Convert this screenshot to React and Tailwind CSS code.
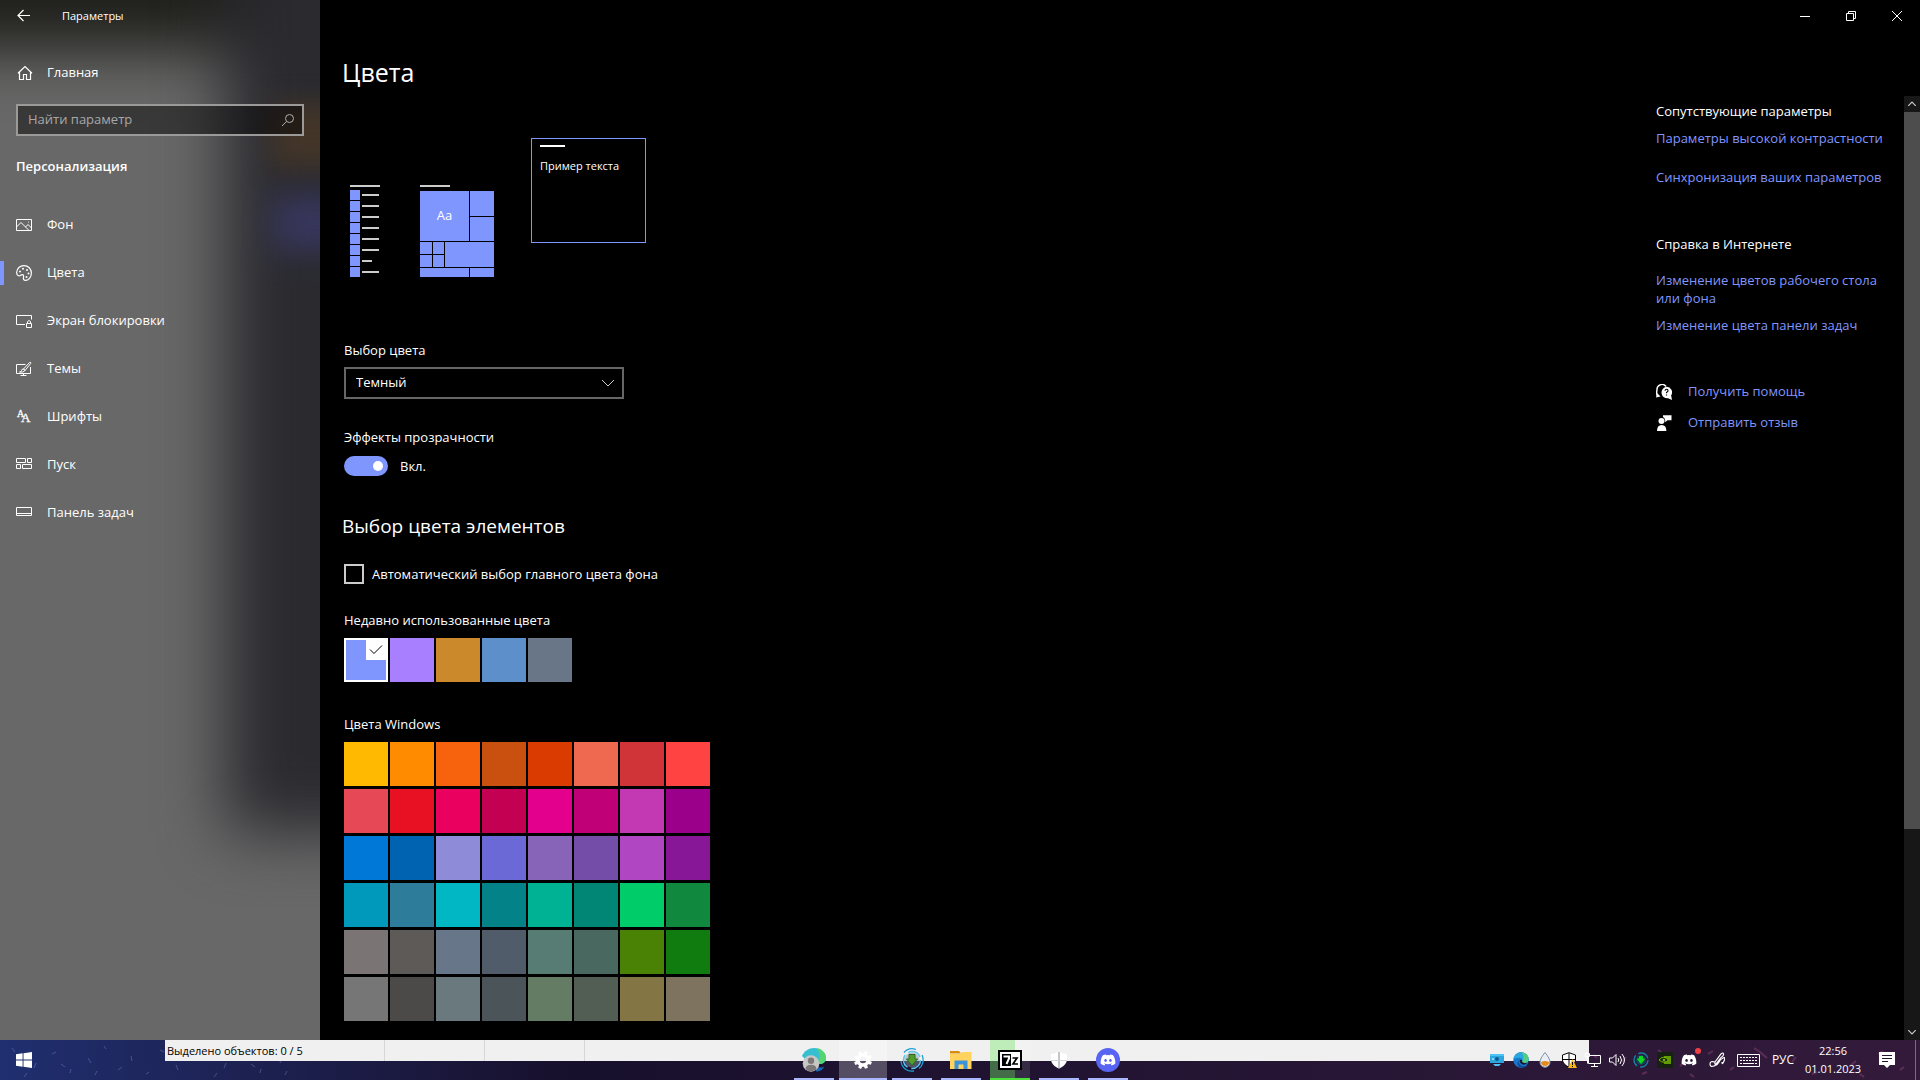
import { useState } from "react";
import { FaDiscord } from "react-icons/fa";

const navItems = [
  { id: "background", label: "Фон", Icon: PictureIcon },
  { id: "colors", label: "Цвета", Icon: PaletteIcon },
  { id: "lock", label: "Экран блокировки", Icon: LockScreenIcon },
  { id: "themes", label: "Темы", Icon: ThemesIcon },
  { id: "fonts", label: "Шрифты", Icon: FontsIcon },
  { id: "start", label: "Пуск", Icon: StartTilesIcon },
  { id: "taskbar", label: "Панель задач", Icon: TaskbarIcon },
];

const recentColors = ["#8096ff", "#a880ff", "#cb892b", "#5d90ca", "#687688"];

const windowsColors = [
  "#ffb900", "#ff8c00", "#f7630c", "#ca5010", "#da3b01", "#ef6950", "#d13438", "#ff4343",
  "#e74856", "#e81123", "#ea005e", "#c30052", "#e3008c", "#bf0077", "#c239b3", "#9a0089",
  "#0078d7", "#0063b1", "#8e8cd8", "#6b69d6", "#8764b8", "#744da9", "#b146c2", "#881798",
  "#0099bc", "#2d7d9a", "#00b7c3", "#038387", "#00b294", "#018574", "#00cc6a", "#10893e",
  "#7a7574", "#5d5a58", "#68768a", "#515c6b", "#567c73", "#486860", "#498205", "#107c10",
  "#767676", "#4c4a48", "#69797e", "#4a5459", "#647c64", "#525e54", "#847545", "#7e735f",
];

/* ---------- sidebar icons ---------- */

function Glyph({ children, className = "h-4 w-4", ...rest }) {
  return (
    <svg viewBox="0 0 16 16" className={className} fill="none" stroke="currentColor" strokeWidth="1" aria-hidden="true" {...rest}>
      {children}
    </svg>
  );
}

function HomeIcon() {
  return (
    <Glyph>
      <path d="M1 8.2 8 1.5l7 6.7M2.500 7v7.500h4V9.500h3v5h4V7" strokeWidth="1.200" />
    </Glyph>
  );
}

function PictureIcon() {
  return (
    <Glyph>
      <path d="M.5 2.500h15v11H.5zM.5 10 5 5.500l7.500 7.500M9.500 10 12 7.500l3.500 3.500" />
      <circle cx="12.500" cy="5" r=".5" fill="currentColor" stroke="none" />
    </Glyph>
  );
}

function PaletteIcon() {
  return (
    <Glyph>
      <path d="M8 .6a7.400 7.400 0 0 1 7.400 7.400c0 4.200-3 7.400-6 7.400-1.600 0-2.200-1-2-2.300.3-1.500.4-3.300-.9-3.500C5 9.400 4.200 11.300 2.500 10.700.9 10.100.6 8.600.6 7.500A7.300 7.300 0 0 1 8 .6Z" strokeWidth="1.200" />
      <g fill="currentColor" stroke="none">
        <circle cx="4" cy="6.500" r="1" />
        <circle cx="7" cy="3.800" r="1" />
        <circle cx="11" cy="5" r="1" />
        <circle cx="12.500" cy="8.500" r="1" />
        <circle cx="10.500" cy="12" r="1" />
      </g>
    </Glyph>
  );
}

function LockScreenIcon() {
  return (
    <Glyph>
      <path d="M9 11.500H.5v-9h15v4M10.500 10.500h5v4h-5zM11.500 10.500V8.500q1.500-2 3 0v2" />
    </Glyph>
  );
}

function ThemesIcon() {
  return (
    <Glyph>
      <path d="M9.500 3.500h-9v9h14V6M7.500 12.500v2M4.500 14.500h6" />
      <path d="m7.500 8 6-6.500q1.500-.8 1.300.8L9 9.500zM7.500 8q-2 0-2 1.500T3.500 11q4 .8 5.500-1.500z" />
    </Glyph>
  );
}

function FontsIcon() {
  return (
    <svg viewBox="0 0 16 16" className="h-4 w-4" fill="currentColor" stroke="currentColor" strokeWidth=".3" aria-hidden="true">
      <text x="1" y="8" fontSize="10" fontFamily="Liberation Serif, serif">A</text>
      <text x="5" y="13" fontSize="13" fontFamily="Liberation Serif, serif">A</text>
    </svg>
  );
}

function StartTilesIcon() {
  return (
    <Glyph>
      <path d="M.5 1.500h9v4h-9zM11.500 1.500h4v4h-4zM.5 7.500h4v4h-4zM6.500 7.500h9v4h-9z" />
    </Glyph>
  );
}

function TaskbarIcon() {
  return (
    <Glyph>
      <path d="M.5 2.500h15v8H.5zM.5 8.500h15" />
    </Glyph>
  );
}

/* ---------- sidebar ---------- */

function Sidebar({ active, onSelect }) {
  return (
    <aside className="relative w-80 shrink-0 overflow-hidden bg-[#686868]">
      {/* acrylic backdrop */}
      <div className="absolute inset-0" aria-hidden="true">
        <div className="absolute -inset-x-32 -top-32 h-[178px] bg-[#1f1f1b] blur-[30px]" />
        <div className="absolute -right-40 -top-32 h-[960px] w-[254px] bg-[#2a2a2f] blur-[32px]" />
        <div className="absolute -right-16 top-[104px] h-16 w-28 bg-[#4a3826] opacity-80 blur-[14px]" />
        <div className="absolute -right-16 top-[195px] h-14 w-28 bg-[#393862] opacity-90 blur-[16px]" />
      </div>

      <div className="relative">
        <div className="flex h-8 items-center">
          <button type="button" aria-label="Назад" className="flex h-8 w-12 items-center justify-center">
            <Glyph>
              <path d="M14 7.500H2.500M7.500 2 2 7.500 7.500 13" strokeWidth="1.200" />
            </Glyph>
          </button>
          <span className="ml-3.5 text-[11px]">Параметры</span>
        </div>

        <a href="#home" className="mt-[17px] flex h-12 items-center gap-3.5 pl-[17px]">
          <HomeIcon />
          <span>Главная</span>
        </a>

        <div className="relative mx-4 mt-[7px]">
          <input
            type="text"
            aria-label="Найти параметр"
            placeholder="Найти параметр"
            className="h-8 w-full border-2 border-[#9c9a98] bg-black/45 pr-8 pb-0.5 pl-2.5 outline-none placeholder:text-[#a8a8a8]"
          />
          <Glyph className="absolute top-2 right-2 h-4 w-4 text-[#b0b0b0]">
            <circle cx="9.500" cy="6.500" r="4" />
            <path d="M6.700 9.300 2 14" />
          </Glyph>
        </div>

        <h2 className="mt-5 ml-4 leading-5 font-semibold">Персонализация</h2>

        <nav className="mt-[25px] flex flex-col">
          {navItems.map(({ id, label, Icon }) => (
            <a
              key={id}
              href={`#${id}`}
              onClick={() => onSelect(id)}
              className="flex h-12 items-center"
            >
              <span className={active === id ? "h-6 w-1 bg-[#8096ff]" : "h-6 w-1"} />
              <span className="ml-3">
                <Icon />
              </span>
              <span className="ml-[15px]">{label}</span>
            </a>
          ))}
        </nav>
      </div>
    </aside>
  );
}

/* ---------- preview ---------- */

function Preview() {
  return (
    <div className="flex h-[139px] pl-1.5" aria-hidden="true">
      <div className="mt-[47px] w-[30px]">
        <div className="h-0.5 bg-[#ccc]" />
        <div className="mt-[3px] flex flex-col gap-px">
          {[17, 17, 17, 17, 17, 17, 10, 17].map((width, i) => (
            <div key={i} className="flex h-2.5 items-center gap-0.5">
              <div className="h-2.5 w-2.5 bg-[#8096ff]" />
              <div className="h-0.5 bg-[#ccc]" style={{ width }} />
            </div>
          ))}
        </div>
      </div>

      <div className="mt-[47px] ml-10 w-[74px]">
        <div className="h-0.5 w-[30px] bg-[#ccc]" />
        <div className="mt-1 grid grid-cols-[49px_24px] gap-px">
          <div className="flex h-[50px] items-center justify-center bg-[#8096ff]">Aa</div>
          <div className="grid grid-rows-[25px_24px] gap-px">
            <div className="bg-[#8096ff]" />
            <div className="bg-[#8096ff]" />
          </div>
        </div>
        <div className="mt-px grid grid-cols-[12px_11px_49px] grid-rows-[12px_12px] gap-px">
          <div className="bg-[#8096ff]" />
          <div className="bg-[#8096ff]" />
          <div className="row-span-2 bg-[#8096ff]" />
          <div className="bg-[#8096ff]" />
          <div className="bg-[#8096ff]" />
        </div>
        <div className="mt-px grid grid-cols-[49px_24px] gap-px">
          <div className="h-[9px] bg-[#8096ff]" />
          <div className="h-[9px] bg-[#8096ff]" />
        </div>
      </div>

      <div className="ml-[37px] h-[105px] w-[115px] border border-[#8096ff] px-2 pt-1.5">
        <div className="h-0.5 w-[25px] bg-white" />
        <p className="mt-[11px] text-[11px] leading-4 whitespace-nowrap">Пример текста</p>
      </div>
    </div>
  );
}

function Swatch({ color, selected, onClick }) {
  return (
    <button
      type="button"
      aria-label={color}
      aria-pressed={selected}
      onClick={onClick}
      className={selected ? "relative h-11 w-11 border-2 border-white" : "relative h-11 w-11"}
      style={{ backgroundColor: color }}
    >
      {selected && (
        <span className="absolute top-0 right-0 flex h-5 w-5 items-center justify-center bg-white text-black">
          <Glyph>
            <path d="m2 7.500 4 4 8-8" />
          </Glyph>
        </span>
      )}
    </button>
  );
}

function ColorSettings() {
  const [accent, setAccent] = useState(recentColors[0]);
  const [mode, setMode] = useState("dark");
  const [transparency, setTransparency] = useState(true);

  return (
    <section className="w-[400px] pl-6">
      <h1 className="-ml-0.5 text-[25px] leading-9">Цвета</h1>
      <div className="mt-12">
        <Preview />
      </div>

      <label htmlFor="mode" className="mt-[63px] block leading-5">Выбор цвета</label>
      <div className="relative mt-[7px] w-[280px]">
        <select
          id="mode"
          value={mode}
          onChange={(e) => setMode(e.target.value)}
          className="h-8 w-full appearance-none border-2 border-[#666] bg-black pl-2.5 outline-none"
        >
          <option value="light">Светлый</option>
          <option value="dark">Темный</option>
          <option value="custom">Пользовательский</option>
        </select>
        <Glyph className="pointer-events-none absolute top-2 right-2 h-4 w-4 text-[#ccc]">
          <path d="m2 5 6 6 6-6" />
        </Glyph>
      </div>

      <label htmlFor="transparency" className="mt-7 block leading-5">Эффекты прозрачности</label>
      <div className="mt-[9px] flex items-center gap-3">
        <input
          id="transparency"
          type="checkbox"
          role="switch"
          checked={transparency}
          onChange={(e) => setTransparency(e.target.checked)}
          className="flex h-5 w-11 appearance-none items-center rounded-full bg-[#666] px-[5px] before:h-2.5 before:w-2.5 before:rounded-full before:bg-white checked:justify-end checked:bg-[#8096ff]"
        />
        <span className="leading-5">{transparency ? "Вкл." : "Откл."}</span>
      </div>

      <h2 className="mt-9 -ml-0.5 text-[19px] leading-7">Выбор цвета элементов</h2>

      <label className="mt-6 flex items-center gap-2 leading-5 whitespace-nowrap">
        <input type="checkbox" className="h-5 w-5 shrink-0 appearance-none border-2 border-[#ccc] checked:bg-[#8096ff]" />
        Автоматический выбор главного цвета фона
      </label>

      <h3 className="mt-[26px] leading-5">Недавно использованные цвета</h3>
      <div className="mt-2 flex gap-0.5">
        {recentColors.map((color) => (
          <Swatch key={color} color={color} selected={color === accent} onClick={() => setAccent(color)} />
        ))}
      </div>

      <h3 className="mt-8 leading-5">Цвета Windows</h3>
      <div className="mt-2 grid w-max grid-cols-8 gap-x-0.5 gap-y-[3px]">
        {windowsColors.map((color) => (
          <Swatch key={color} color={color} selected={color === accent} onClick={() => setAccent(color)} />
        ))}
      </div>
    </section>
  );
}

/* ---------- related links ---------- */

function RelatedLinks() {
  return (
    <section className="mt-[47px] w-[248px] text-[#8096ff]">
      <h3 className="leading-5 text-white">Сопутствующие параметры</h3>
      <a href="#contrast" className="mt-[7px] block leading-5 whitespace-nowrap">Параметры высокой контрастности</a>
      <a href="#sync" className="mt-[19px] block leading-5 whitespace-nowrap">Синхронизация ваших параметров</a>

      <h3 className="mt-[47px] leading-5 text-white">Справка в Интернете</h3>
      <a href="#help-desktop" className="mt-[17px] block pr-4 leading-[18px]">
        Изменение цветов рабочего стола или фона
      </a>
      <a href="#help-taskbar" className="mt-[9px] block leading-[18px]">Изменение цвета панели задач</a>

      <a href="#support" className="mt-12 flex h-5 items-center gap-4">
        <svg viewBox="0 0 16 16" className="h-4 w-4 text-white" fill="currentColor" aria-hidden="true">
          <path d="M1.200 11.500Q.2 9 1 6A5 5 0 0 1 10 2.500" fill="none" stroke="currentColor" strokeWidth="1.400" />
          <path d="M0 13.500 1 9l3.500 3.500Z" />
          <path d="M10.500 2.800a5.400 5.400 0 0 1 4.600 8.500L16 16l-3.800-1.700A5.700 5.700 0 1 1 10.500 2.800Z" />
          <path d="M9 6.800q.2-1.500 1.600-1.500T12 6.800q0 .7-.9 1.200t-.6 1.300M10.500 10.400v1.200" fill="none" stroke="#000" strokeWidth="1.100" />
        </svg>
        <span>Получить помощь</span>
      </a>
      <a href="#feedback" className="mt-[11px] flex h-5 items-center gap-4">
        <svg viewBox="0 0 16 16" className="h-4 w-4 text-white" fill="currentColor" aria-hidden="true">
          <circle cx="5.500" cy="6" r="3" />
          <path d="M1 16q0-6 4.700-6t4.700 6ZM7 .2h8.500v5h-4l-2.300 2V5.200H9Q8.800 2.500 7 2Z" />
        </svg>
        <span>Отправить отзыв</span>
      </a>
    </section>
  );
}

function ScrollBar() {
  return (
    <div className="flex w-4 shrink-0 flex-col bg-[#171717]">
      <button type="button" aria-label="Прокрутить вверх" className="flex h-4 items-center justify-center text-[#ccc]">
        <Glyph className="h-3 w-3">
          <path d="m3 10.500 5-5 5 5" strokeWidth="1.500" />
        </Glyph>
      </button>
      <div className="grow">
        <div className="h-[78.600%] bg-[#4d4d4d]" />
      </div>
      <button type="button" aria-label="Прокрутить вниз" className="flex h-4 items-center justify-center text-[#ccc]">
        <Glyph className="h-3 w-3">
          <path d="m3 5.500 5 5 5-5" strokeWidth="1.500" />
        </Glyph>
      </button>
    </div>
  );
}

function WindowControls() {
  return (
    <div className="flex h-8 justify-end">
      <button type="button" aria-label="Свернуть" className="flex w-[46px] items-center justify-center">
        <svg viewBox="0 0 10 10" className="h-2.5 w-2.5" stroke="currentColor" fill="none"><path d="M0 5.500h10" /></svg>
      </button>
      <button type="button" aria-label="Восстановить" className="flex w-[46px] items-center justify-center">
        <svg viewBox="0 0 10 10" className="h-2.5 w-2.5" stroke="currentColor" fill="none"><path d="M.5 2.500h7v7h-7zM2.500 2.500v-2h7v7h-2" /></svg>
      </button>
      <button type="button" aria-label="Закрыть" className="flex w-[46px] items-center justify-center">
        <svg viewBox="0 0 10 10" className="h-2.5 w-2.5" stroke="currentColor" fill="none"><path d="m0 0 10 10M10 0 0 10" /></svg>
      </button>
    </div>
  );
}

/* ---------- taskbar ---------- */

function EdgeIcon({ className }) {
  return (
    <svg viewBox="0 0 24 24" className={className} aria-hidden="true">
      <circle cx="12" cy="12" r="11.500" fill="#1879cc" />
      <path d="M.8 10C2 4 6.500.5 12 .5c7 0 11.500 5 11.500 10 0 4-3 6-6 6-3.500 0-4.500-1.500-3.500-3 1-2-1-5-5-5-3.500 0-6.500 1.500-8.200 1.500Z" fill="#2aa7dc" />
      <path d="M13 .6c6.500.3 10.500 5.400 10.500 9.900 0 4-3 6-6 6-3.500 0-4.500-1.500-3.500-3 1.500-3 3.500-7-1-12.900Z" fill="#5bd570" opacity=".85" />
      <path d="M8.500 13c-.5 4 3 8 8 8 2.500 0 4.500-1 5.500-2-2 3-6 5-10 4.500-5-.5-7-6-3.500-10.500Z" fill="#0d4f9c" />
      <path d="M10 12.500q2-2 4 0-1 1.500 0 3 3 2 7 .5-1 3-5 3-6-.5-6-6.500Z" fill="#1b1530" />
    </svg>
  );
}

function EdgeProfileIcon() {
  return (
    <svg viewBox="0 0 24 24" className="h-6 w-6" aria-hidden="true">
      <path d="M0 8C2 3 7 0 12 0c7 0 12 5 12 10 0 4-3 6-7 6L6 14Z" fill="#35bfd0" />
      <path d="M15 .2c6 1 9 5.500 9 9.800 0 4-3 6-7 6l-2-3c4-3 3-8 0-12.800Z" fill="#55d472" />
      <path d="M14 23.500c4 0 7-2 8.500-5-3 1.500-6 1-8 0Z" fill="#1567b8" />
      <circle cx="9" cy="15.500" r="8.300" fill="#c7c7c7" />
      <circle cx="9" cy="12.700" r="3.200" fill="#7c7878" />
      <path d="M3.500 21.300q0-4.600 5.500-4.600t5.500 4.600a8.300 8.300 0 0 1-11 0Z" fill="#7c7878" />
    </svg>
  );
}

function GearIcon() {
  return (
    <svg viewBox="0 0 20 20" className="h-5 w-5" aria-hidden="true">
      <g fill="#fff">
        {[0, 45, 90, 135, 180, 225, 270, 315].map((angle) => (
          <path key={angle} d="M8 5 8.500 1h3L12 5Z" transform={`rotate(${angle + 22} 10 10)`} />
        ))}
      </g>
      <circle cx="10" cy="10" r="5" fill="none" stroke="#fff" strokeWidth="3.500" />
    </svg>
  );
}

function DownloaderIcon({ className }) {
  return (
    <svg viewBox="0 0 24 24" className={className} fill="none" aria-hidden="true">
      <circle cx="12" cy="12" r="7.500" fill="#7f97a5" opacity=".5" />
      <path d="M4 4.500a11 11 0 0 1 12-3M22 7a11 11 0 0 1-3 13.500M14 23A11 11 0 0 1 1 13" stroke="#1ea0dc" strokeWidth="1.300" />
      <circle cx="12" cy="12" r="8.500" stroke="#5cc4ee" strokeWidth="1.500" strokeDasharray="14 4" />
      <path d="M9 6.500h6V11h2.500L12 17.500 6.500 11H9Z" fill="#4f9d2c" stroke="#35641e" />
    </svg>
  );
}

function FolderIcon() {
  return (
    <svg viewBox="0 0 24 20" className="h-5 w-6" aria-hidden="true">
      <path d="M1 1h9l2 2.500H1Z" fill="#d98e0b" />
      <path d="M1 4h10l2-2h9.500v17H1Z" fill="#ffd35e" />
      <path d="M5.500 19v-8.500h13V19h-4v-4.500h-5V19Z" fill="#3e93d8" />
    </svg>
  );
}

function SevenZipIcon() {
  return (
    <svg viewBox="0 0 24 20" className="h-5 w-6" aria-hidden="true">
      <path d="M1 1h22v18H1Z" fill="#fff" stroke="#000" strokeWidth="2" />
      <path d="M4 4h9v12H4Z" fill="#000" />
      <path d="M5.500 6.500H11v2L8.500 14" fill="none" stroke="#fff" strokeWidth="2" />
      <path d="M14.500 8h4.500l-4 6h5" fill="none" stroke="#000" strokeWidth="1.700" />
    </svg>
  );
}

function ShieldIcon() {
  return (
    <svg viewBox="0 0 20 20" className="h-5 w-5" aria-hidden="true">
      <path d="M10 1.500Q14 4 18 4v5c0 4-3 7.500-8 9.500-5-2-8-5.500-8-9.500V4q4 0 8-2.500Z" fill="#fff" />
      <path d="M10 2v17" stroke="#8d8a96" />
      <path d="M2 10.500h16" stroke="#d5d3da" />
    </svg>
  );
}

function DiscordIcon() {
  return (
    <span className="flex h-6 w-6 items-center justify-center rounded-full bg-[#5865f2]">
      <FaDiscord className="h-4 w-4 text-white" />
    </span>
  );
}

const apps = [
  { id: "edge", label: "Microsoft Edge", Icon: EdgeProfileIcon },
  { id: "settings", label: "Параметры", Icon: GearIcon, active: true },
  { id: "downloader", label: "Загрузки", Icon: () => <DownloaderIcon className="h-6 w-6" /> },
  { id: "explorer", label: "Проводник", Icon: FolderIcon },
  { id: "7zip", label: "7-Zip", Icon: SevenZipIcon, progress: true },
  { id: "defender", label: "Безопасность", Icon: ShieldIcon },
  { id: "discord", label: "Discord", Icon: DiscordIcon },
];

function AppButton({ label, Icon, active, progress }) {
  return (
    <button
      type="button"
      aria-label={label}
      className={`relative flex h-10 w-12 items-center justify-center ${active ? "bg-white/25" : ""}`}
    >
      {progress && (
        <span className="absolute inset-x-1 inset-y-0 flex bg-white/10">
          <span className="h-full w-[25px] bg-[#5fe64f]/35" />
        </span>
      )}
      <span className="relative">
        <Icon />
      </span>
      <span
        className={
          progress
            ? "absolute inset-x-1 bottom-0 h-0.5 bg-[#4be03a]"
            : active
              ? "absolute inset-x-0 bottom-0 h-0.5 bg-[#aab6ff]"
              : "absolute inset-x-1 bottom-0 h-0.5 bg-[#aab6ff]"
        }
      />
    </button>
  );
}

function TrayIcons() {
  return (
    <>
      <TrayButton label="Диспетчер">
        <svg viewBox="0 0 16 16" className="h-4 w-4"><path d="M1 2h14v9H1Z" fill="#2ba6e0" /><path d="M1 2h14v2H1ZM4 12h8l-2 2H6Z" fill="#4cc2f5" /><circle cx="8" cy="7" r="2" fill="#0d5a8c" /><path d="M3 6.500h2v1H3z" fill="#fff" /></svg>
      </TrayButton>
      <TrayButton label="Microsoft Edge">
        <EdgeIcon className="h-4 w-4" />
      </TrayButton>
      <TrayButton label="Rainmeter">
        <svg viewBox="0 0 16 16" className="h-4 w-4"><path d="M8 .5q5 6 5 9.800a5 5 0 0 1-10 0Q3 6.500 8 .5Z" fill="#e9eef5" stroke="#7e8ea8" /><path d="M4 10q4-2 8 0a4 4 0 0 1-8 0Z" fill="#e58b1c" /></svg>
      </TrayButton>
      <TrayButton label="Безопасность Windows">
        <svg viewBox="0 0 16 16" className="h-4 w-4"><path d="M8 .7 14.500 3v5q0 4-6.500 7.300Q1.500 12 1.500 8V3Z" fill="#fff" stroke="#000" /><path d="M8 1v14M2 7.500h12" stroke="#000" /><path d="m11.500 7 4.500 9H7Z" fill="#fcb518" /><path d="M11.500 10v3M11.500 14v1" stroke="#000" /></svg>
      </TrayButton>
      <TrayButton label="Сеть">
        <Glyph><path d="M4 3.500h11.500v8H3.500V6M9.500 11.500v3M6 14.500h7M.5 1.500h4v3h-4zM2.500 4.500v7" /></Glyph>
      </TrayButton>
      <TrayButton label="Громкость">
        <Glyph><path d="M.5 6h3L7 2.500v11L3.500 10h-3ZM9 6q1.500 2 0 4M11 4q3 4 0 8M13 2q5 6 0 12" /></Glyph>
      </TrayButton>
      <TrayButton label="Загрузки">
        <svg viewBox="0 0 16 16" className="h-4 w-4" fill="none"><circle cx="8" cy="8" r="7" stroke="#1a7ea6" strokeWidth="1.300" strokeDasharray="12 3" /><circle cx="8" cy="8" r="5" fill="#0b4a5c" /><path d="M6.500 4.500h3v2.500h2L8 11.500 4.500 7h2Z" fill="#12d81a" stroke="#12d81a" /></svg>
      </TrayButton>
      <TrayButton label="NVIDIA">
        <svg viewBox="0 0 16 16" className="h-4 w-4" fill="none"><path d="M0 0h16v16H0z" fill="#17210f" /><path d="M7 4h7v8H7Z" fill="#76b900" opacity=".8" /><path d="M2 8q4.500-5.500 9.500 0Q7 12.500 2 8Z" fill="#17210f" stroke="#76b900" /><circle cx="7" cy="8" r="1.300" fill="#76b900" /></svg>
      </TrayButton>
      <TrayButton label="Discord">
        <span className="relative">
          <FaDiscord className="h-4 w-4" />
          <span className="absolute -top-1 -right-1 h-1.5 w-1.5 rounded-full bg-[#f23f42]" />
        </span>
      </TrayButton>
    </>
  );
}

function TrayButton({ label, children }) {
  return (
    <button type="button" aria-label={label} className="flex h-10 w-6 items-center justify-center">
      {children}
    </button>
  );
}

function Taskbar() {
  return (
    <footer className="relative h-10 shrink-0 bg-linear-to-r from-[#1f2f70] via-[#17102c] via-30% to-[#331a3b]">
      {/* wallpaper seen through the bar */}
      <svg className="absolute inset-0 h-full w-full" aria-hidden="true">
        <defs>
          <pattern id="specks" width="190" height="40" patternUnits="userSpaceOnUse">
            <path
              d="m12 8 3 4M34 28l2-5M52 14l4-2M70 33l1-4M88 18l3 5M104 6l2 3M118 30l4-3M131 16l1 5M146 34l3-2M160 10l4 2M176 25l2 5M97 31l-2 4M24 37l3-4M61 24l4 3"
              stroke="#8ba0e8"
              strokeOpacity=".35"
            />
          </pattern>
          <pattern id="haze" width="170" height="40" patternUnits="userSpaceOnUse">
            <path
              d="m8 14 5-3M30 30l4-3M54 8l6 4M60 12l7 6M92 22l4-5M112 34l5-2M128 10l4 3M150 26l6-5M160 34l4 3"
              stroke="#c05a96"
              strokeOpacity=".3"
              strokeWidth="2"
            />
          </pattern>
        </defs>
        <rect width="16%" height="100%" fill="url(#specks)" />
        <rect x="83%" width="17%" height="100%" fill="url(#haze)" />
      </svg>

      {/* status strip of the window behind */}
      <div className="absolute top-0 right-[331px] left-[165px] flex h-[21px] bg-[#f0f0f0] text-[11px] leading-[21px] text-black">
        <div className="w-[220px] border-r border-[#d7d7d7] pl-0.5">Выделено объектов: 0 / 5</div>
        <div className="w-[100px] border-r border-[#d7d7d7]" />
        <div className="w-[100px] border-r border-[#d7d7d7]" />
      </div>

      <div className="relative grid h-10 grid-cols-[1fr_auto_1fr]">
        <button type="button" aria-label="Пуск" className="flex h-10 w-12 items-center justify-center">
          <svg viewBox="0 0 16 16" className="h-4 w-4" fill="#fff"><path d="m0 2.200 6.600-.9v6.200H0ZM7.500 1.200 16 0v7.500H7.500ZM0 8.400h6.600v6.300L0 13.800ZM7.500 8.400H16V16l-8.500-1.200Z" /></svg>
        </button>

        <div className="flex gap-px pl-0.5">
          {apps.map((app) => (
            <AppButton key={app.id} {...app} />
          ))}
        </div>

        <div className="flex items-center justify-end">
          <TrayIcons />
          <button type="button" aria-label="Windows Ink" className="flex h-10 w-8 items-center justify-center">
            <Glyph strokeWidth="1.200"><path d="M6 10 12 2q2-2 2.500 0T12 5.500L7 12q-1.500 1-1-2ZM6 10Q1 8.500 1 12t4 2 5-4 4-4 1 3-2 1" /></Glyph>
          </button>
          <button type="button" aria-label="Сенсорная клавиатура" className="flex h-10 w-[30px] items-center justify-center">
            <svg viewBox="0 0 23 14" className="h-3.5 w-[23px]" fill="none" stroke="currentColor">
              <path d="M.5 1.500h22v12H.5z" />
              <path d="M3 4.500h17M3 7.500h17" strokeDasharray="2 1" />
              <path d="M3 10.500h2M6 10.500h11M18 10.500h2" />
            </svg>
          </button>
          <button type="button" className="h-10 w-10 text-[12px]">РУС</button>
          <button type="button" className="flex h-10 w-[60px] flex-col items-center justify-center text-[11px] leading-[18px]">
            <span>22:56</span>
            <span>01.01.2023</span>
          </button>
          <button type="button" aria-label="Уведомления" className="flex h-10 w-[52px] items-center justify-center pr-1">
            <svg viewBox="0 0 16 16" className="h-4 w-4"><path d="M0 0h16v13h-5l-3 3-3-3H0Z" fill="#fff" /><path d="M3 3.500h10M3 6.500h10M3 9.500h6" stroke="#241432" /></svg>
          </button>
          <div className="h-10 w-[5px] border-l border-[#77707f]" />
        </div>
      </div>
    </footer>
  );
}

export default function App() {
  const [page, setPage] = useState("colors");

  return (
    <div className="flex h-screen flex-col overflow-hidden bg-black font-['Open_Sans','Noto_Sans',sans-serif] text-[13px] text-white">
      <div className="flex min-h-0 flex-1">
        <Sidebar active={page} onSelect={setPage} />
        <div className="flex min-w-0 flex-1 flex-col">
          <WindowControls />
          <div className="flex min-h-0 flex-1">
            <main className="flex min-w-0 flex-1 justify-between overflow-hidden pt-[22px]">
              <ColorSettings />
              <RelatedLinks />
            </main>
            <div className="flex pt-16">
              <ScrollBar />
            </div>
          </div>
        </div>
      </div>
      <Taskbar />
    </div>
  );
}
